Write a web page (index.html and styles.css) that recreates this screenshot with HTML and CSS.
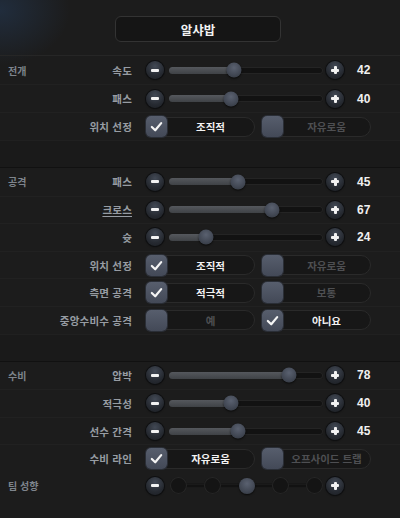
FILE: index.html
```html
<!DOCTYPE html>
<html lang="ko">
<head>
<meta charset="utf-8">
<link rel="stylesheet" href="styles.css">
</head>
<body>
<div class="page">
  <div class="header">
    <div class="title">알샤밥</div>
  </div>

  <section class="section s1">
    <div class="row">
      <div class="sec">전개</div><div class="lbl">속도</div>
      <div class="ctrl slider-ctrl">
        <span class="btn minus"></span>
        <div class="track"><div class="fill" style="width:42%"></div><span class="thumb" style="left:42%"></span></div>
        <span class="btn plus"></span>
        <span class="val">42</span>
      </div>
    </div>
    <div class="row">
      <div class="sec"></div><div class="lbl">패스</div>
      <div class="ctrl slider-ctrl">
        <span class="btn minus"></span>
        <div class="track"><div class="fill" style="width:40%"></div><span class="thumb" style="left:40%"></span></div>
        <span class="btn plus"></span>
        <span class="val">40</span>
      </div>
    </div>
    <div class="row">
      <div class="sec"></div><div class="lbl">위치 선정</div>
      <div class="ctrl opts">
        <div class="opt on"><span class="box"><svg viewBox="0 0 20 20"><polyline points="4.5,10.5 8.5,14.5 15.5,6"/></svg></span><span class="otext">조직적</span></div>
        <div class="opt"><span class="box"></span><span class="otext">자유로움</span></div>
      </div>
    </div>
  </section>
  <div class="spacer"></div>

  <section class="section s2">
    <div class="row">
      <div class="sec">공격</div><div class="lbl">패스</div>
      <div class="ctrl slider-ctrl">
        <span class="btn minus"></span>
        <div class="track"><div class="fill" style="width:45%"></div><span class="thumb" style="left:45%"></span></div>
        <span class="btn plus"></span>
        <span class="val">45</span>
      </div>
    </div>
    <div class="row">
      <div class="sec"></div><div class="lbl"><u>크로스</u></div>
      <div class="ctrl slider-ctrl">
        <span class="btn minus"></span>
        <div class="track"><div class="fill" style="width:67%"></div><span class="thumb" style="left:67%"></span></div>
        <span class="btn plus"></span>
        <span class="val">67</span>
      </div>
    </div>
    <div class="row">
      <div class="sec"></div><div class="lbl">슛</div>
      <div class="ctrl slider-ctrl">
        <span class="btn minus"></span>
        <div class="track"><div class="fill" style="width:24%"></div><span class="thumb" style="left:24%"></span></div>
        <span class="btn plus"></span>
        <span class="val">24</span>
      </div>
    </div>
    <div class="row">
      <div class="sec"></div><div class="lbl">위치 선정</div>
      <div class="ctrl opts">
        <div class="opt on"><span class="box"><svg viewBox="0 0 20 20"><polyline points="4.5,10.5 8.5,14.5 15.5,6"/></svg></span><span class="otext">조직적</span></div>
        <div class="opt"><span class="box"></span><span class="otext">자유로움</span></div>
      </div>
    </div>
    <div class="row">
      <div class="sec"></div><div class="lbl">측면 공격</div>
      <div class="ctrl opts">
        <div class="opt on"><span class="box"><svg viewBox="0 0 20 20"><polyline points="4.5,10.5 8.5,14.5 15.5,6"/></svg></span><span class="otext">적극적</span></div>
        <div class="opt"><span class="box"></span><span class="otext">보통</span></div>
      </div>
    </div>
    <div class="row">
      <div class="sec"></div><div class="lbl">중앙수비수 공격</div>
      <div class="ctrl opts">
        <div class="opt"><span class="box"></span><span class="otext">예</span></div>
        <div class="opt on"><span class="box"><svg viewBox="0 0 20 20"><polyline points="4.5,10.5 8.5,14.5 15.5,6"/></svg></span><span class="otext">아니요</span></div>
      </div>
    </div>
  </section>
  <div class="spacer"></div>

  <section class="section s3">
    <div class="row">
      <div class="sec">수비</div><div class="lbl">압박</div>
      <div class="ctrl slider-ctrl">
        <span class="btn minus"></span>
        <div class="track"><div class="fill" style="width:78%"></div><span class="thumb" style="left:78%"></span></div>
        <span class="btn plus"></span>
        <span class="val">78</span>
      </div>
    </div>
    <div class="row">
      <div class="sec"></div><div class="lbl">적극성</div>
      <div class="ctrl slider-ctrl">
        <span class="btn minus"></span>
        <div class="track"><div class="fill" style="width:40%"></div><span class="thumb" style="left:40%"></span></div>
        <span class="btn plus"></span>
        <span class="val">40</span>
      </div>
    </div>
    <div class="row">
      <div class="sec"></div><div class="lbl">선수 간격</div>
      <div class="ctrl slider-ctrl">
        <span class="btn minus"></span>
        <div class="track"><div class="fill" style="width:45%"></div><span class="thumb" style="left:45%"></span></div>
        <span class="btn plus"></span>
        <span class="val">45</span>
      </div>
    </div>
    <div class="row">
      <div class="sec"></div><div class="lbl">수비 라인</div>
      <div class="ctrl opts">
        <div class="opt on"><span class="box"><svg viewBox="0 0 20 20"><polyline points="4.5,10.5 8.5,14.5 15.5,6"/></svg></span><span class="otext">자유로움</span></div>
        <div class="opt"><span class="box"></span><span class="otext">오프사이드 트랩</span></div>
      </div>
    </div>
  </section>

  <section class="section s4">
    <div class="row team">
      <div class="sec">팀 성향</div>
      <div class="ctrl slider-ctrl">
        <span class="btn minus"></span>
        <div class="steps">
          <span class="line"></span>
          <span class="notch"></span>
          <span class="notch"></span>
          <span class="notch cur"></span>
          <span class="notch"></span>
          <span class="notch"></span>
        </div>
        <span class="btn plus"></span>
      </div>
    </div>
  </section>
</div>
</body>
</html>
```

FILE: styles.css
```css
* { box-sizing: border-box; }
html, body { margin: 0; padding: 0; }
body {
  width: 400px;
  height: 518px;
  overflow: hidden;
  background: #1c1c1c;
  font-family: "Noto Sans CJK KR", "Noto Sans", sans-serif;
  font-weight: 700;
}
.page {
  width: 400px;
  height: 518px;
  background:
    radial-gradient(ellipse 70px 55px at 0 10px, rgba(40, 70, 110, 0.4), rgba(40, 70, 110, 0) 100%),
    #1c1c1c;
}
.header {
  height: 56px;
  padding-top: 16px;
  display: flex;
  justify-content: center;
  padding-right: 4px;
  border-bottom: 1px solid #262626;
}
.title {
  width: 166px;
  height: 26px;
  border-radius: 6px;
  border: 1px solid #333;
  background: #151515;
  color: #f2f2f2;
  font-size: 12.5px;
  display: flex;
  align-items: center;
  justify-content: center;
}
.section { display: flex; flex-direction: column; }
.s1 .row { height: 28px; }
.s2 .row, .s3 .row { height: 27.6px; }
.s4 .row { height: 28px; }
.row {
  display: grid;
  grid-template-columns: 60px 64px 1fr;
  align-items: center;
  padding-left: 8px;
  border-top: 1px solid rgba(255, 255, 255, 0.025);
}
.row:first-child { border-top: none; }
.row.team { grid-template-columns: 124px 1fr; }
.sec {
  color: #7e848c;
  font-size: 10px;
  white-space: nowrap;
}
.lbl {
  color: #979ca3;
  font-size: 10.5px;
  text-align: right;
  white-space: nowrap;
  letter-spacing: 0.2px;
  direction: rtl;
}
.lbl u { text-underline-offset: 2px; }
.spacer {
  height: 28px;
  background: #1a1a1a;
  border-top: 1px solid #202020;
  border-bottom: 1px solid #111;
}
.ctrl { display: flex; align-items: center; margin-left: 14px; }
.btn {
  width: 18px;
  height: 18px;
  border-radius: 50%;
  flex: none;
  position: relative;
  background: radial-gradient(circle at 50% 30%, #424955 0%, #262a31 60%, #1b1e23 100%);
  box-shadow: 0 0 0 1px #0e0f11, 0 1px 2px rgba(0,0,0,0.6);
}
.btn::before {
  content: "";
  position: absolute;
  left: 5px;
  top: 7.5px;
  width: 8px;
  height: 3px;
  border-radius: 1px;
  background: #f2f2f2;
}
.btn.plus::after {
  content: "";
  position: absolute;
  left: 7.5px;
  top: 5px;
  width: 3px;
  height: 8px;
  border-radius: 1px;
  background: #f2f2f2;
}
.track {
  position: relative;
  width: 154px;
  height: 7px;
  margin-left: 5px;
  margin-right: 3px;
  border-radius: 4px;
  background: #121212;
  box-shadow: inset 0 0 0 1px #242424;
}
.fill {
  height: 100%;
  border-radius: 4px;
  background: linear-gradient(#55585d, #3f4246);
}
.thumb {
  position: absolute;
  top: 50%;
  width: 15px;
  height: 15px;
  border-radius: 50%;
  transform: translate(-50%, -50%);
  background: radial-gradient(circle at 50% 35%, #5a6170 0%, #414753 60%, #2f343c 100%);
  box-shadow: 0 1px 2px rgba(0,0,0,0.7);
}
.val {
  margin-left: 13px;
  color: #f0f0f0;
  font-size: 12px;
  font-family: "Liberation Sans", "Noto Sans", sans-serif;
  font-weight: 700;
}
.opts { gap: 7px; }
.opt {
  width: 109px;
  height: 20px;
  display: flex;
  align-items: center;
  border-radius: 10px;
  border: 1px solid #2a2a2a;
  background: #171717;
}
.box {
  width: 21px;
  height: 21px;
  margin: -1px 0 -1px -1px;
  border-radius: 5px;
  flex: none;
  background: linear-gradient(#575e6d, #434957);
  box-shadow: 0 0 0 1px #2a2e36;
  display: flex;
  align-items: center;
  justify-content: center;
}
.box svg { width: 17px; height: 17px; }
.box polyline {
  fill: none;
  stroke: #f4f4f4;
  stroke-width: 2.6;
  stroke-linecap: round;
  stroke-linejoin: round;
}
.otext {
  flex: 1;
  text-align: center;
  font-size: 10.5px;
  color: #4e4f52;
  white-space: nowrap;
}
.opt.on .otext { color: #f2f2f2; }
.steps {
  position: relative;
  width: 154px;
  height: 18px;
  margin-left: 5px;
  margin-right: 3px;
  display: flex;
  align-items: center;
  justify-content: space-between;
  padding: 0 0 0 1px;
}
.line {
  position: absolute;
  left: 8px;
  right: 8px;
  top: 50%;
  height: 5px;
  transform: translateY(-50%);
  background: #121212;
  box-shadow: inset 0 0 0 1px #222;
}
.notch {
  position: relative;
  width: 17px;
  height: 17px;
  border-radius: 50%;
  background: #141414;
  box-shadow: inset 0 0 0 1px #262626;
}
.notch.cur {
  width: 16px;
  height: 16px;
  background: radial-gradient(circle at 50% 35%, #5a6170 0%, #414753 60%, #2f343c 100%);
  box-shadow: 0 1px 2px rgba(0,0,0,0.7);
}
```
